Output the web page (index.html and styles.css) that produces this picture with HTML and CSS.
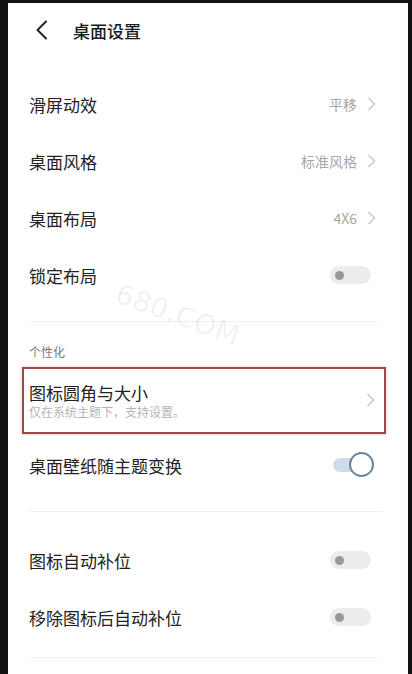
FILE: index.html
```html
<!DOCTYPE html>
<html>
<head>
  <meta charset="utf-8">
  <title>桌面设置</title>
  <link rel="stylesheet" href="styles.css">
</head>
<body>
  <div class="screen">
    <div class="header">
      <svg class="back" width="14" height="20" viewBox="0 0 14 20"><path d="M11 1.5 L2.5 10 L11 18.5" fill="none" stroke="#222" stroke-width="2" stroke-linecap="round" stroke-linejoin="round"/></svg>
      <span class="title">桌面设置</span>
    </div>

    <div class="group first">
      <div class="row">
        <span class="label">滑屏动效</span>
        <span class="value">平移</span>
        <svg class="arrow" width="9" height="14" viewBox="0 0 9 14"><path d="M1.5 1 L7.5 7 L1.5 13" fill="none" stroke="#c6c6c6" stroke-width="1.4"/></svg>
      </div>
      <div class="row">
        <span class="label">桌面风格</span>
        <span class="value">标准风格</span>
        <svg class="arrow" width="9" height="14" viewBox="0 0 9 14"><path d="M1.5 1 L7.5 7 L1.5 13" fill="none" stroke="#c6c6c6" stroke-width="1.4"/></svg>
      </div>
      <div class="row">
        <span class="label">桌面布局</span>
        <span class="value">4X6</span>
        <svg class="arrow" width="9" height="14" viewBox="0 0 9 14"><path d="M1.5 1 L7.5 7 L1.5 13" fill="none" stroke="#c6c6c6" stroke-width="1.4"/></svg>
      </div>
      <div class="row toggle-row">
        <span class="label">锁定布局</span>
        <span class="switch"><span class="knob"></span></span>
      </div>
    </div>

    <div class="divider"></div>

    <div class="section-title">个性化</div>

    <div class="row boxed">
      <div class="texts">
        <span class="label">图标圆角与大小</span>
        <span class="sub">仅在系统主题下，支持设置。</span>
      </div>
      <svg class="arrow" width="9" height="14" viewBox="0 0 9 14"><path d="M1.5 1 L7.5 7 L1.5 13" fill="none" stroke="#c6c6c6" stroke-width="1.4"/></svg>
    </div>

    <div class="row toggle-row after-box">
      <span class="label">桌面壁纸随主题变换</span>
      <span class="switch on"><span class="knob"></span></span>
    </div>

    <div class="divider second"></div>

    <div class="group">
      <div class="row toggle-row">
        <span class="label">图标自动补位</span>
        <span class="switch"><span class="knob"></span></span>
      </div>
      <div class="row toggle-row">
        <span class="label">移除图标后自动补位</span>
        <span class="switch"><span class="knob"></span></span>
      </div>
    </div>

    <div class="divider last"></div>

    <div class="watermark">680.COM</div>
  </div>
</body>
</html>
```

FILE: styles.css
```css
html, body {
  margin: 0;
  padding: 0;
  background: #111;
}

body {
  width: 412px;
  height: 674px;
  overflow: hidden;
  font-family: "Noto Sans CJK SC", "Noto Sans", sans-serif;
}

.screen {
  position: relative;
  width: 400px;
  height: 671px;
  margin: 3px 0 0 8px;
  background: #fff;
  overflow: hidden;
}

.header {
  display: flex;
  align-items: center;
  height: 54px;
  padding-left: 27px;
}

.back {
  display: block;
}

.title {
  margin-left: 24px;
  font-size: 17px;
  font-weight: 500;
  color: #1a1a1a;
}

.group.first {
  margin-top: 18.5px;
}

.row {
  display: flex;
  align-items: center;
  height: 57px;
  padding: 0 32px 0 21px;
}

.toggle-row {
  padding-right: 37px;
}

.label {
  flex: 1;
  font-size: 17px;
  color: #222;
}

.value {
  font-size: 14px;
  color: #a6a6a6;
  margin-right: 10px;
}

.arrow {
  display: block;
}

.switch {
  position: relative;
  width: 41px;
  height: 18px;
  border-radius: 9px;
  background: #ececec;
}

.knob {
  position: absolute;
  left: 5px;
  top: 4.5px;
  width: 9px;
  height: 9px;
  border-radius: 50%;
  background: #999;
}

.switch.on {
  width: 40px;
  height: 14px;
  border-radius: 7px;
  background: #cfdcea;
  margin-right: -2px;
}

.switch.on .knob {
  left: 16px;
  top: -6px;
  width: 21px;
  height: 21px;
  background: #fff;
  border: 2.5px solid #6f8599;
}

.divider {
  height: 1px;
  margin: 17px 30px 0 21px;
  background: #f0f0f0;
}

.divider.second {
  margin: 17px 25px 20px 21px;
}

.divider.last {
  margin-top: 11px;
}

.section-title {
  height: 30px;
  line-height: 30px;
  margin-top: 15px;
  padding-left: 21px;
  font-size: 12px;
  color: #7a7a7a;
}

.row.boxed {
  height: 63px;
  margin: 0 22px 0 14px;
  padding: 0 9px 0 5px;
  border: 2px solid #9c4b4b;
  box-shadow: 0 0 3px rgba(210, 120, 120, 0.45);
}

.row.after-box {
  margin-top: 3px;
}

.texts {
  flex: 1;
  display: flex;
  flex-direction: column;
  padding-top: 2px;
}

.texts .label {
  line-height: 22px;
}

.sub {
  font-size: 12px;
  line-height: 16px;
  color: #b4b4b4;
}

.watermark {
  position: absolute;
  left: 108px;
  top: 296px;
  font-family: "DejaVu Sans", sans-serif;
  font-size: 27px;
  letter-spacing: 0;
  color: rgba(0, 0, 0, 0.06);
  transform: rotate(20deg) scaleX(1.05);
  pointer-events: none;
}
```
